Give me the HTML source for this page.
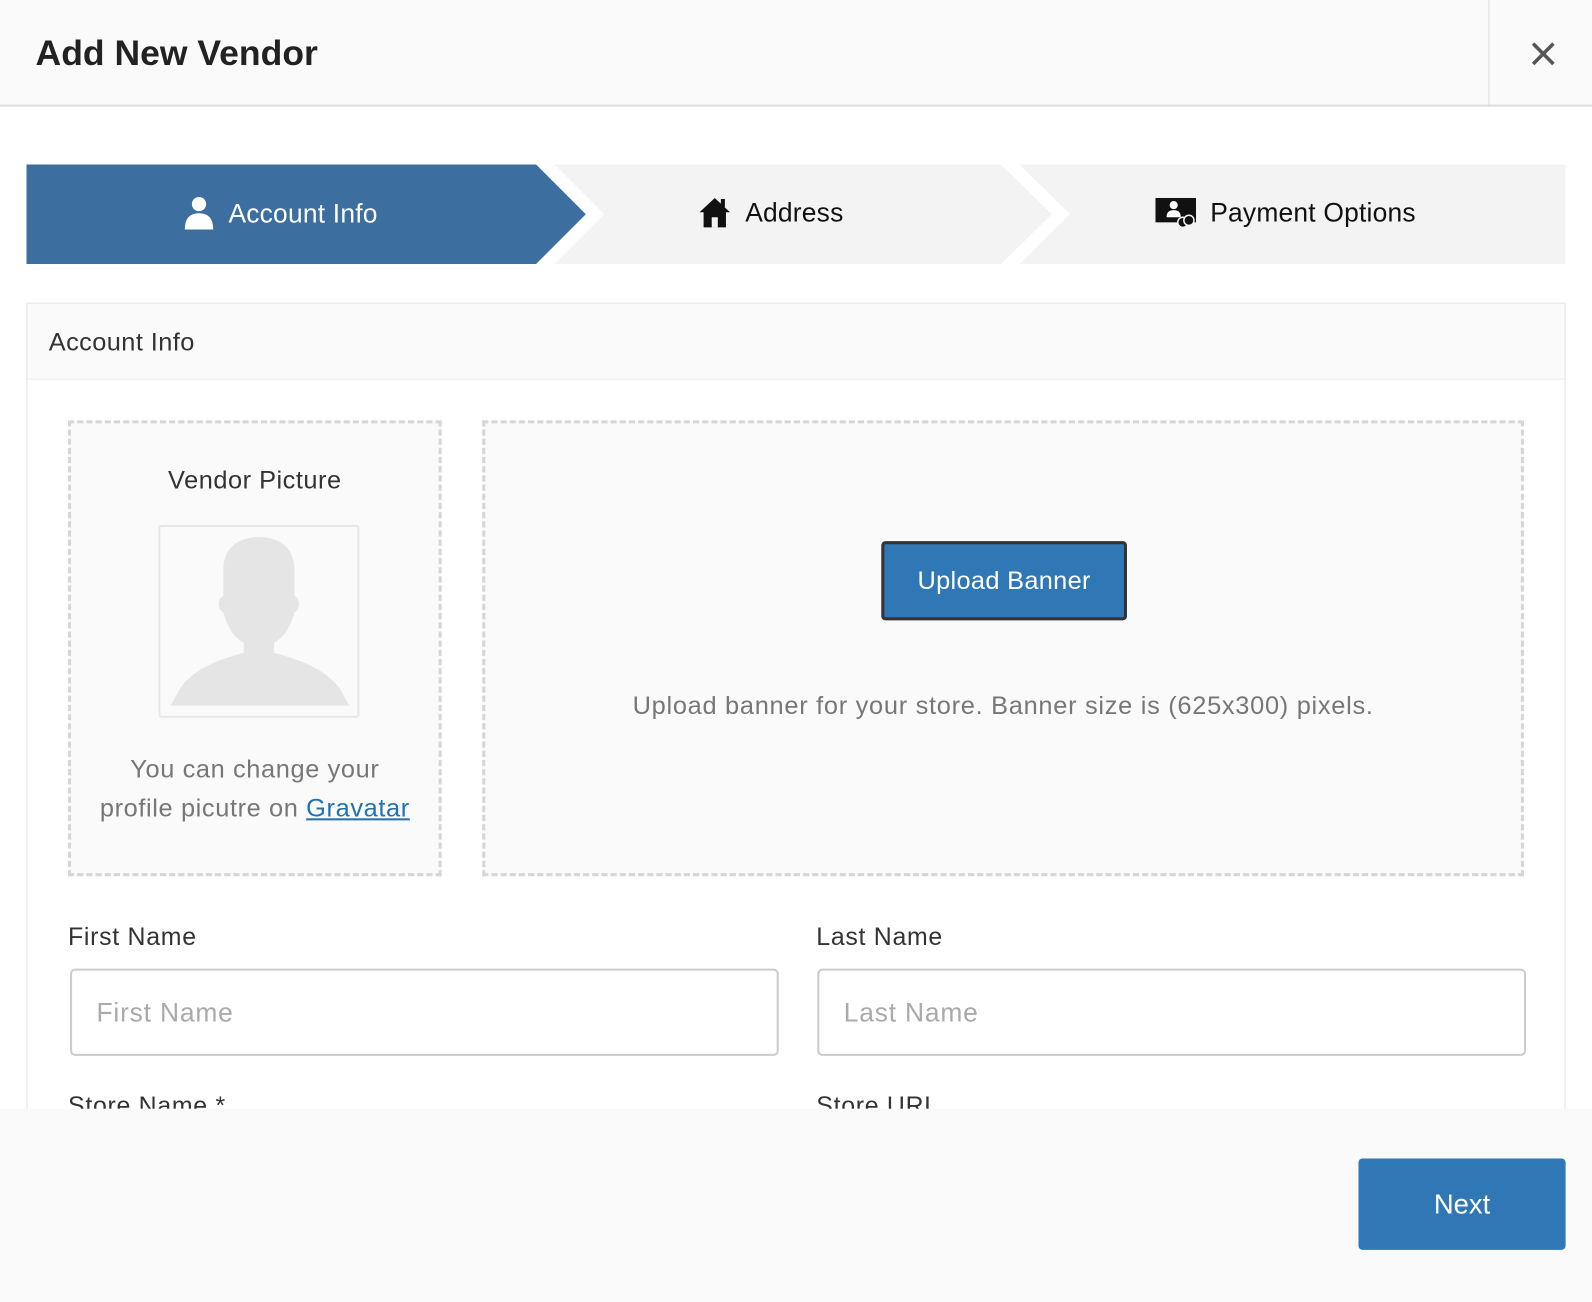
<!DOCTYPE html>
<html><head><meta charset="utf-8"><style>
*{box-sizing:border-box;margin:0;padding:0}
body{width:1592px;height:1278px;overflow:hidden;background:#fff;font-family:"Liberation Sans",sans-serif;position:relative;color:#333}
.wrap{position:absolute;left:0;top:0;width:1568px;height:1259px;transform:scale(1.0153);transform-origin:0 0}
.hdr{position:absolute;left:0;top:0;width:1568px;height:105px;background:#fafafa;border-bottom:2px solid #ddd}
.hdr h1{position:absolute;left:35px;top:33px;font-size:35px;font-weight:bold;color:#222;letter-spacing:0px}
.hdr .sep{position:absolute;left:1466px;top:0;width:1px;height:105px;background:#ddd}
.hdr .x{position:absolute;left:1506px;top:39px}
.steps{position:absolute;left:26px;top:162px;width:1516px;height:98px}
.lbl{position:absolute;top:31px;font-size:26px;display:flex;align-items:center;gap:14px;letter-spacing:0.2px}
.panel{position:absolute;left:26px;top:298px;width:1516px;height:800px;border:1px solid #e3e3e3;border-bottom:none}
.ph{height:75px;background:#fafafa;border-bottom:1px solid #eee;padding:24px 21px;font-size:25px;color:#333;letter-spacing:0.4px}
.dash{position:absolute;border:3px dashed #d6d6d6;background:#fafafa}
.field-l{position:absolute;font-size:24.5px;color:#333;letter-spacing:0.7px}
.inp{position:absolute;height:86px;border:2px solid #ccc;border-radius:5px;background:#fff;font-size:26px;color:#aaa;padding:26px 24px;letter-spacing:0.8px}
.foot{position:absolute;left:0;top:1092px;width:1568px;height:190px;background:#fafafa}
.next{position:absolute;left:1338px;top:1141px;width:204px;height:90px;background:#2f78b5;border-radius:4px;color:#fff;font-size:27px;text-align:center;line-height:90px}
</style></head><body><div class="wrap">
<div class="hdr"><h1>Add New Vendor</h1><div class="sep"></div>
<svg class="x" width="28" height="28" viewBox="0 0 28 28"><path d="M4 4L24 24M24 4L4 24" stroke="#555" stroke-width="3.5"/></svg></div>

<div class="steps">
<svg width="1516" height="98" style="position:absolute;left:0;top:0">
<polygon points="0,0 502,0 551,49 502,98 0,98" fill="#3c6e9f"/>
<polygon points="520,0 960,0 1010,49 960,98 520,98 569,49" fill="#f3f3f3"/>
<polygon points="978,0 1516,0 1516,98 978,98 1028,49" fill="#f3f3f3"/>
</svg>
<div class="lbl" style="left:155px;color:#fff">
<svg width="30" height="34" viewBox="0 0 30 34"><circle cx="15" cy="8" r="7" fill="#fff"/><path d="M1 33 Q1 17 15 17 Q29 17 29 33 Z" fill="#fff"/></svg>Account Info</div>
<div class="lbl" style="left:662px;color:#111">
<svg width="32" height="32" viewBox="0 0 32 32"><path d="M16 2 L31 16 L27 16 L27 31 L5 31 L5 16 L1 16 Z" fill="#111"/><rect x="22" y="3" width="4" height="8" fill="#111"/><rect x="13" y="21" width="6" height="10" fill="#f3f3f3"/></svg>Address</div>
<div class="lbl" style="left:1112px;color:#111">
<svg width="40" height="32" viewBox="0 0 40 32"><rect x="0" y="2" width="40" height="24" fill="#111"/><circle cx="18" cy="9" r="4" fill="#fff"/><path d="M11 21 Q11 14 18 14 Q25 14 25 21Z" fill="#fff"/><circle cx="27" cy="26" r="5" fill="#111" stroke="#f3f3f3" stroke-width="1.5"/><circle cx="33" cy="24" r="5" fill="#111" stroke="#f3f3f3" stroke-width="1.5"/></svg>Payment Options</div>
</div>

<div class="panel"><div class="ph">Account Info</div></div>

<div class="dash" style="left:67px;top:414px;width:368px;height:449px">
<div style="position:absolute;left:0;width:100%;top:42px;text-align:center;font-size:25px;color:#333;letter-spacing:0.5px">Vendor Picture</div>
<div style="position:absolute;left:86px;top:100px;width:198px;height:190px;border:2px solid #e8e8e8;border-radius:3px;background:#fafafa;overflow:hidden">
<svg width="194" height="186" viewBox="0 0 194 186"><path d="M97 10 C75 10 62 22 62 42 L62 68 C56 70 56 82 62 84 C66 100 74 110 82 114 L82 124 C60 130 35 138 20 158 L10 176 L186 176 L176 158 C160 138 134 130 112 124 L112 114 C120 110 128 100 132 84 C138 82 138 70 132 68 L132 42 C132 22 119 10 97 10Z" fill="#e5e5e5"/></svg></div>
<div style="position:absolute;left:-10px;width:382px;top:322px;text-align:center;font-size:25px;line-height:38px;color:#777;letter-spacing:0.6px">You can change your<br>profile picutre on <span style="color:#2271b1;text-decoration:underline">Gravatar</span></div>
</div>

<div class="dash" style="left:475px;top:414px;width:1026px;height:449px">
<div style="position:absolute;left:390px;top:116px;width:242px;height:78px;background:#2f78b5;border:3px solid #333;border-radius:4px;color:#fff;font-size:25px;text-align:center;line-height:72px;letter-spacing:0.3px">Upload Banner</div>
<div style="position:absolute;left:0;width:100%;top:264px;text-align:center;font-size:25px;color:#777;letter-spacing:0.7px">Upload banner for your store. Banner size is (625x300) pixels.</div>
</div>

<div class="field-l" style="left:67px;top:910px">First Name</div>
<div class="field-l" style="left:804px;top:910px">Last Name</div>
<div class="inp" style="left:69px;top:954px;width:698px">First Name</div>
<div class="inp" style="left:805px;top:954px;width:698px">Last Name</div>
<div class="field-l" style="left:67px;top:1076px">Store Name *</div>
<div class="field-l" style="left:804px;top:1076px">Store URL</div>

<div class="foot"></div>
<div class="next">Next</div>
</div></body></html>
